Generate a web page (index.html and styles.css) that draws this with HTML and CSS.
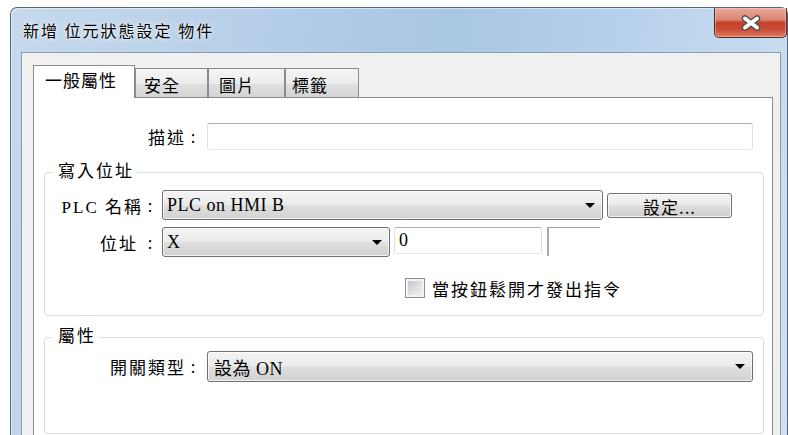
FILE: index.html
```html
<!DOCTYPE html>
<html lang="zh-Hant">
<head>
<meta charset="utf-8">
<title>新增 位元狀態設定 物件</title>
<link rel="stylesheet" href="styles.css">
</head>
<body>
<div class="window">
  <div class="titlebar">
    <span class="title">新增 位元狀態設定 物件</span>
    <button class="close" type="button" aria-label="關閉">
      <svg width="22" height="16" viewBox="0 0 22 16" aria-hidden="true">
        <path d="M5 3.5 L17 12.5 M17 3.5 L5 12.5" fill="none" stroke="#4a4a4a" stroke-width="6.5" stroke-linecap="round"/>
        <path d="M5 3.5 L17 12.5 M17 3.5 L5 12.5" fill="none" stroke="#ffffff" stroke-width="4" stroke-linecap="round"/>
      </svg>
    </button>
  </div>

  <div class="client">
    <div class="tabs" role="tablist">
      <div class="tab tab-active tab-general" role="tab">一般屬性</div>
      <div class="tab tab-security" role="tab">安全</div>
      <div class="tab tab-picture" role="tab">圖片</div>
      <div class="tab tab-label" role="tab">標籤</div>
    </div>

    <div class="panel" role="tabpanel">
      <div class="row row-desc">
        <span class="lbl lbl-desc">描述<span class="colon">:</span></span>
        <span class="textbox textbox-desc"></span>
      </div>

      <fieldset class="group group-write">
        <legend>寫入位址</legend>
        <div class="row row-plc">
          <span class="lbl lbl-write">PLC 名稱<span class="colon">:</span></span>
          <div class="combo combo-plc"><span class="combo-text">PLC on HMI B</span><span class="arrow"></span></div>
          <button class="btn btn-setup" type="button">設定...</button>
        </div>
        <div class="row row-addr">
          <span class="lbl lbl-write">位址<span class="colon colon-wide">:</span></span>
          <div class="combo combo-addr"><span class="combo-text">X</span><span class="arrow"></span></div>
          <span class="textbox textbox-addr">0</span>
          <span class="sunken"></span>
        </div>
        <label class="row row-check">
          <span class="checkbox"></span>
          <span class="check-text">當按鈕鬆開才發出指令</span>
        </label>
      </fieldset>

      <fieldset class="group group-attr">
        <legend>屬性</legend>
        <div class="row row-switch">
          <span class="lbl lbl-attr">開關類型<span class="colon">:</span></span>
          <div class="combo combo-switch"><span class="combo-text">設為 ON</span><span class="arrow"></span></div>
        </div>
      </fieldset>
    </div>
  </div>
</div>
</body>
</html>
```

FILE: styles.css
```css
* { box-sizing: border-box; }

html, body { margin: 0; padding: 0; }

body {
  width: 788px;
  height: 435px;
  overflow: hidden;
  background: #ffffff;
  color: #000;
  font-family: "Noto Sans CJK TC", sans-serif;
}

/* ---------- window frame ---------- */
.window {
  display: flex;
  flex-direction: column;
  width: 778px;
  height: 440px;
  margin: 7px 0 0 10px;
  border: 1px solid #55667c;
  border-bottom: 0;
  border-radius: 7px 7px 0 0;
  background: linear-gradient(100deg, #c6d9ed 0%, #b7cfe8 28%, #a9c6e3 52%, #b9d2eb 74%, #cfe1f2 100%);
  box-shadow: inset 1px 1px 0 rgba(255, 255, 255, 0.5);
}

.titlebar {
  flex: none;
  height: 44px;
  display: flex;
  justify-content: space-between;
  align-items: flex-start;
}

.title {
  padding-left: 12px;
  height: 44px;
  line-height: 44px;
  font-size: 16px;
  letter-spacing: 2px;
  white-space: nowrap;
  text-shadow: 0 0 6px rgba(255, 255, 255, 0.9), 0 0 2px rgba(255, 255, 255, 0.9);
}

.close {
  width: 73px;
  height: 30px;
  padding: 0;
  border: 1px solid #5e2a20;
  border-top: 0;
  border-radius: 0 0 5px 5px;
  background: linear-gradient(#e8a899 0%, #da8772 40%, #c4412a 50%, #c64a31 72%, #dc7c62 100%);
  box-shadow: inset 0 0 0 1px rgba(255, 215, 205, 0.45);
  display: flex;
  align-items: center;
  justify-content: center;
}

/* ---------- client area ---------- */
.client {
  flex: 1;
  display: flex;
  flex-direction: column;
  margin: 0 6px 0 10px;
  border: 1px solid #8c9aab;
  border-bottom: 0;
  background: #f0f0f0;
}

.tabs {
  flex: none;
  display: flex;
  align-items: flex-end;
  height: 45px;
  padding-left: 11px;
}

.tab {
  height: 30px;
  padding: 6px 0 0 8px;
  border: 1px solid #898c95;
  border-bottom: 0;
  background: linear-gradient(#f4f4f4 0%, #ececec 50%, #e0e0e0 52%, #d3d3d3 100%);
  font-size: 17px;
  line-height: 20px;
  letter-spacing: 1px;
  white-space: nowrap;
}

.tab-active {
  position: relative;
  z-index: 1;
  height: 33px;
  padding: 4px 0 0 11px;
  background: #ffffff;
}

.tab-general { width: 102px; }
.tab-security { width: 73px; }
.tab-picture { width: 77px; padding-left: 10px; }
.tab-label { width: 74px; padding-left: 6px; }

.panel {
  flex: 1;
  margin: -1px 7px 0 11px;
  padding: 0 8px 0 10px;
  border: 1px solid #898c95;
  border-bottom: 0;
  background: #ffffff;
}

/* ---------- form rows ---------- */
.row {
  display: flex;
  align-items: center;
}

.lbl {
  display: flex;
  justify-content: flex-end;
  align-items: center;
  flex: none;
  font-family: "Liberation Serif", "Noto Sans CJK TC", serif;
  font-size: 17px;
  letter-spacing: 2px;
  white-space: nowrap;
}

.colon {
  width: 14px;
  text-align: center;
  letter-spacing: 0;
  font-family: "Noto Sans", sans-serif;
}

.colon-wide { margin-left: 5px; }

.lbl-desc { width: 156px; margin-right: 7px; }
.lbl-write { width: 112px; margin-right: 5px; }
.lbl-attr { width: 155px; margin-right: 7px; }

.row-desc {
  height: 27px;
  margin-top: 25px;
}

.textbox {
  display: flex;
  align-items: center;
  height: 27px;
  padding-left: 4px;
  border: 1px solid #dbdfe6;
  border-top-color: #abadb3;
  border-bottom-color: #e3e9ef;
  border-radius: 3px;
  background: #fff;
  font-family: "Liberation Serif", serif;
  font-size: 18px;
}

.textbox-desc { width: 546px; }

.textbox-addr {
  width: 148px;
  margin-left: 4px;
  align-self: flex-start;
}

.sunken {
  align-self: flex-start;
  width: 53px;
  height: 29px;
  margin-left: 5px;
  border-top: 1px solid #a0a0a0;
  border-left: 2px solid #a8a8a8;
}

/* ---------- group boxes ---------- */
.group {
  min-width: 0;
  margin: 0;
  border: 1px solid #d5dfe5;
  border-radius: 4px;
}

.group legend {
  margin-left: 7px;
  padding: 0 3px 4px 6px;
  font-size: 17px;
  line-height: 18px;
  letter-spacing: 2px;
}

.group-write {
  margin-top: 11px;
  padding: 7px 0 17px 0;
}

.group-attr {
  margin-top: 10px;
  padding: 3px 0 51px 0;
}

.row-plc { height: 30px; }
.row-addr { height: 30px; margin-top: 7px; }

.row-check {
  height: 20px;
  margin-top: 21px;
  padding-left: 360px;
}

.checkbox {
  flex: none;
  width: 20px;
  height: 20px;
  margin-right: 7px;
  border: 1px solid #8e8f8f;
  background: linear-gradient(135deg, #b9bdc3 0%, #dcdfe2 50%, #f2f2f2 100%);
  box-shadow: inset 0 0 0 2px #f4f4f4;
}

.check-text {
  font-size: 17px;
  letter-spacing: 2px;
  white-space: nowrap;
}

/* ---------- combo boxes and buttons ---------- */
.combo {
  display: flex;
  align-items: center;
  height: 30px;
  padding: 0 7px 0 4px;
  border: 1px solid #707070;
  border-radius: 3px;
  background: linear-gradient(#f3f3f3 0%, #ebebeb 48%, #dfdfdf 52%, #d2d2d2 100%);
  box-shadow: inset 0 0 0 1px rgba(255, 255, 255, 0.7);
  font-family: "Liberation Serif", "Noto Sans CJK TC", serif;
  font-size: 18px;
  letter-spacing: 0.5px;
  white-space: nowrap;
}

.combo-text { flex: 1; }

.arrow {
  width: 0;
  height: 0;
  border-left: 5px solid transparent;
  border-right: 5px solid transparent;
  border-top: 5px solid #000;
}

.combo-plc { width: 441px; }
.combo-addr { width: 228px; }
.combo-switch { width: 546px; height: 31px; padding-left: 6px; }

.btn {
  width: 125px;
  height: 25px;
  margin-left: 4px;
  padding: 0;
  border: 1px solid #707070;
  border-radius: 3px;
  background: linear-gradient(#f3f3f3 0%, #ebebeb 48%, #dddddd 52%, #cfcfcf 100%);
  box-shadow: inset 0 0 0 1px rgba(255, 255, 255, 0.75);
  font-family: "Noto Sans CJK TC", sans-serif;
  font-size: 17px;
  letter-spacing: 1px;
  color: #000;
}
```
